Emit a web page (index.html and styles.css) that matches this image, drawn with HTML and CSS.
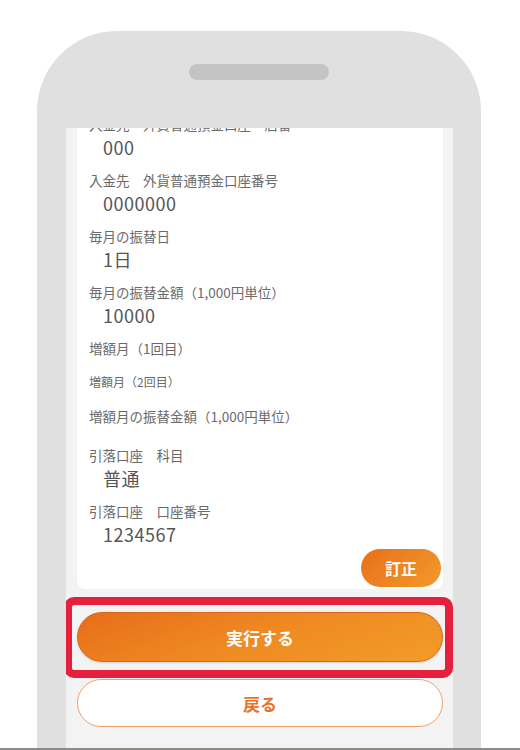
FILE: index.html
```html
<!DOCTYPE html>
<html lang="ja">
<head>
  <meta charset="UTF-8" />
  <meta name="viewport" content="width=device-width, initial-scale=1.0"/>
  <title>振替内容の確認</title>
  <link rel="stylesheet" href="styles.css">
</head>
<body>
  <div class="phone">
    <div class="notch"></div>
    <div class="screen">
      <div class="card">
        <div class="fields">
          <div class="field">
            <p class="label">入金先　外貨普通預金口座　店番</p>
            <p class="value">000</p>
          </div>
          <div class="field">
            <p class="label">入金先　外貨普通預金口座番号</p>
            <p class="value">0000000</p>
          </div>
          <div class="field">
            <p class="label">毎月の振替日</p>
            <p class="value">1日</p>
          </div>
          <div class="field">
            <p class="label">毎月の振替金額（1,000円単位）</p>
            <p class="value">10000</p>
          </div>
          <div class="field">
            <p class="label">増額月（1回目）</p>
          </div>
          <div class="field">
            <p class="label small">増額月（2回目）</p>
          </div>
          <div class="field wide">
            <p class="label">増額月の振替金額（1,000円単位）</p>
          </div>
          <div class="field">
            <p class="label">引落口座　科目</p>
            <p class="value">普通</p>
          </div>
          <div class="field">
            <p class="label">引落口座　口座番号</p>
            <p class="value">1234567</p>
          </div>
        </div>
        <div class="edit-row">
          <button class="btn-edit">訂正</button>
        </div>
      </div>

      <div class="highlight">
        <button class="btn-primary">実行する</button>
      </div>
      <button class="btn-back">戻る</button>
    </div>
  </div>
  <div class="bottom-rule"></div>
</body>
</html>
```

FILE: styles.css
```css
* {
  margin: 0;
  padding: 0;
  box-sizing: border-box;
}
body {
  font-family: "Noto Sans CJK JP", "Noto Sans", sans-serif;
  background: #fff;
  width: 520px;
  height: 750px;
  overflow: hidden;
  color: #555;
}
.phone {
  margin: 31px 0 0 37px;
  width: 444px;
  height: 717px;
  padding-top: 33px;
  background: #e0e0e0;
  border-radius: 80px 80px 0 0;
  overflow: hidden;
}
.notch {
  width: 140px;
  height: 16px;
  margin: 0 auto 48px;
  background: #c4c4c4;
  border-radius: 8px;
}
.screen {
  margin: 0 28px 0 29px;
  height: 620px;
  padding: 0 10px 0 11px;
  background: #f3f3f3;
  overflow: hidden;
}
.card {
  background: #fff;
  border-radius: 0 0 8px 8px;
  padding: 0 2px 2px 12px;
}
.fields {
  margin-top: -14px;
}
.field {
  margin-bottom: 12px;
}
.field .label:only-child {
  padding-bottom: 2px;
}
.field.wide {
  margin-bottom: 17px;
}
.label {
  font-size: 13.5px;
  line-height: 20px;
  color: #6a6a6a;
}
.label.small {
  font-size: 12px;
}
.value {
  font-size: 18px;
  line-height: 22px;
  padding: 2px 0 0 14px;
  letter-spacing: 0.5px;
  color: #555;
}
.edit-row {
  display: flex;
  justify-content: flex-end;
  margin-top: -8px;
}
.btn-edit {
  width: 80px;
  height: 38px;
  border: none;
  border-radius: 19px;
  background: linear-gradient(135deg, #e8701c 0%, #f29a28 100%);
  color: #fff;
  font-family: inherit;
  font-size: 16px;
  font-weight: bold;
}
.highlight {
  margin: 8px -10px 0 -13px;
  padding: 7px 2px 8px 5px;
  border: 8px solid #e61f3d;
  border-radius: 10px;
}
.btn-primary {
  display: block;
  width: 100%;
  height: 50px;
  border: 1px solid #d8671a;
  border-radius: 25px;
  background: linear-gradient(160deg, #e86d1a 0%, #ef8a22 50%, #f29c28 100%);
  box-shadow: 0 1px 2px rgba(0, 0, 0, 0.15);
  color: #fff;
  font-family: inherit;
  font-size: 17px;
  font-weight: bold;
}
.btn-back {
  display: block;
  width: 366px;
  height: 48px;
  margin-top: 1px;
  border: 1.5px solid #f0a370;
  border-radius: 24px;
  background: #fff;
  color: #e8722a;
  font-family: inherit;
  font-size: 17px;
  font-weight: bold;
}
.bottom-rule {
  height: 2px;
  background: #8c8c8c;
}
```
